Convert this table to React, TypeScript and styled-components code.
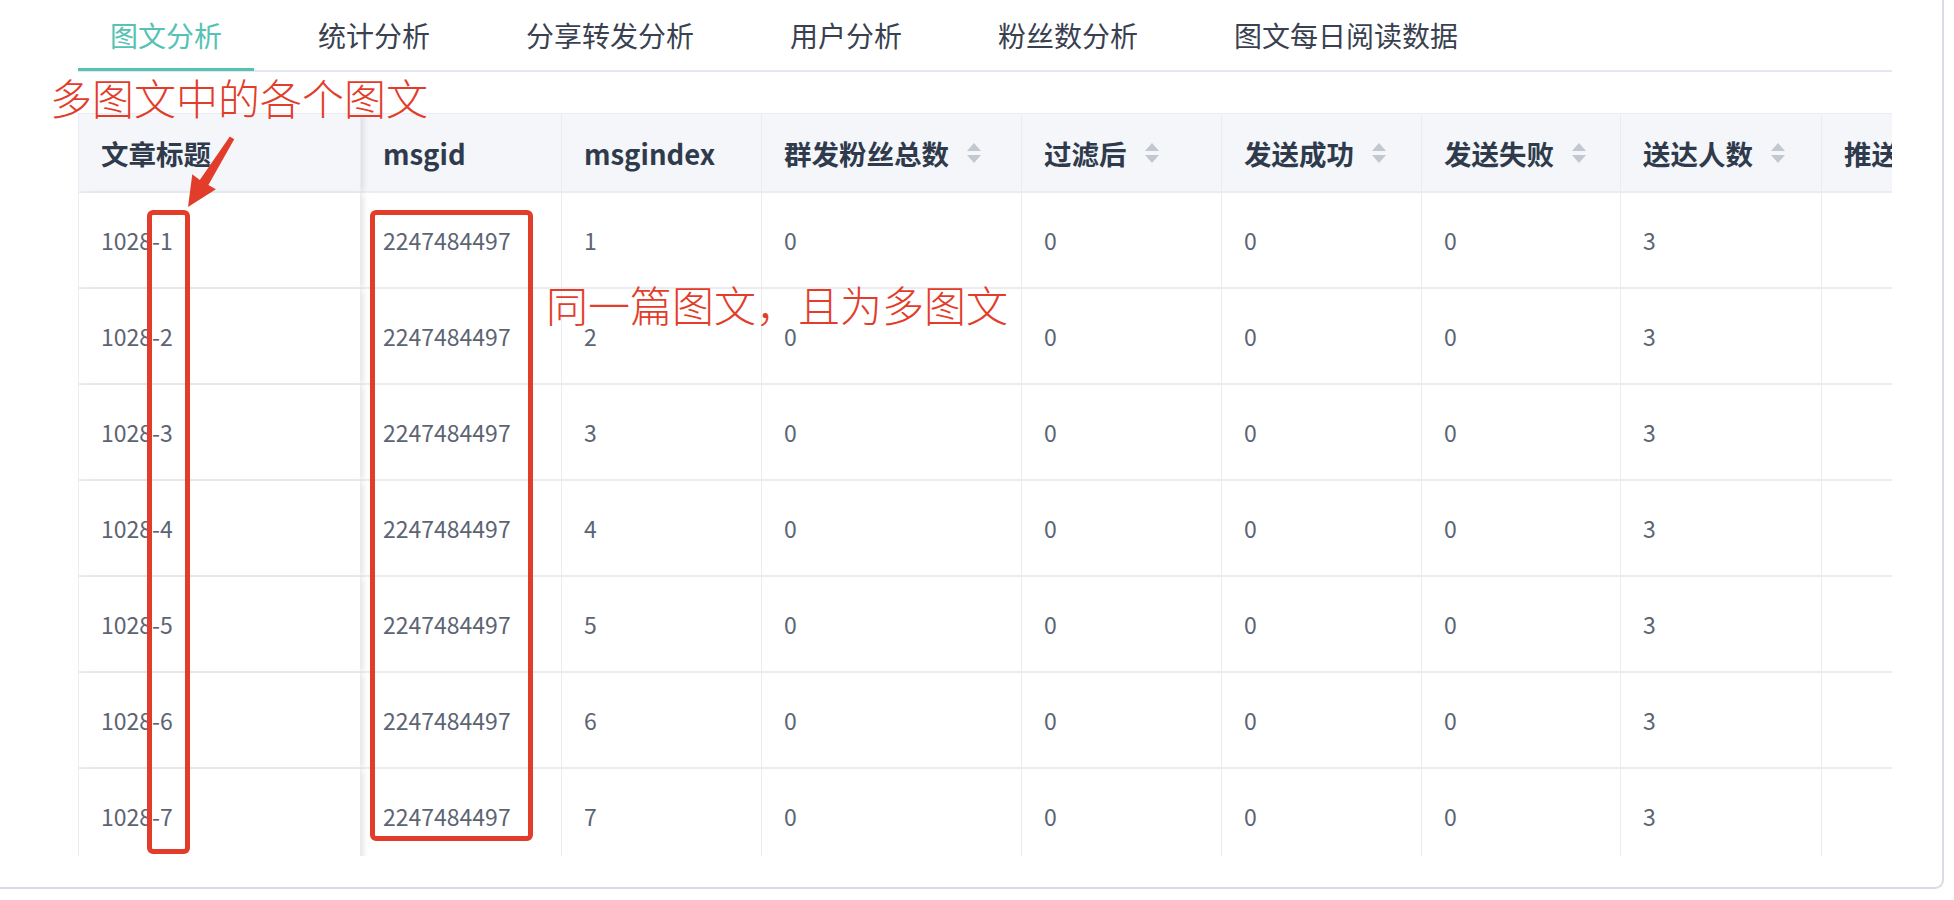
import styled, { createGlobalStyle } from 'styled-components'

const GlobalStyle = createGlobalStyle`
  html, body {
    margin: 0;
    padding: 0;
    background: #ffffff;
    overflow: hidden;
  }
  * {
    box-sizing: border-box;
  }
`

const FONT = `"Noto Sans CJK SC", "Noto Sans", sans-serif`
const ACCENT = '#55c2b3'
const MARK = '#e23d2a'
const LINE = '#e9ecf1'

const TABS = ['图文分析', '统计分析', '分享转发分析', '用户分析', '粉丝数分析', '图文每日阅读数据']

interface Column {
  title: string
  width: number
  sortable?: boolean
}

const COLUMNS: Column[] = [
  { title: '文章标题', width: 282 },
  { title: 'msgid', width: 201 },
  { title: 'msgindex', width: 200 },
  { title: '群发粉丝总数', width: 260, sortable: true },
  { title: '过滤后', width: 200, sortable: true },
  { title: '发送成功', width: 200, sortable: true },
  { title: '发送失败', width: 199, sortable: true },
  { title: '送达人数', width: 201, sortable: true },
  { title: '推送次数', width: 200, sortable: true },
]

const ROWS = Array.from({ length: 7 }, (_, i) => [
  `1028-${i + 1}`,
  '2247484497',
  String(i + 1),
  '0',
  '0',
  '0',
  '0',
  '3',
  '',
])

const Page = styled.div`
  width: 1954px;
  height: 900px;
  font-family: ${FONT};
`

const Card = styled.div`
  position: relative;
  width: 1944px;
  height: 889px;
  border-right: 2px solid #d9dce3;
  border-bottom: 2px solid #d9dce3;
  border-bottom-right-radius: 9px;
  overflow: hidden;
`

const TabBar = styled.div`
  display: flex;
  gap: 32px;
  margin-left: 78px;
  width: 1814px;
  height: 72px;
  border-bottom: 2px solid #e4e7ed;
`

const Tab = styled.div<{ $active?: boolean }>`
  position: relative;
  padding: 0 32px;
  line-height: 70px;
  font-size: 28px;
  white-space: nowrap;
  color: ${(p) => (p.$active ? ACCENT : '#394150')};

  &::after {
    content: '';
    display: ${(p) => (p.$active ? 'block' : 'none')};
    position: absolute;
    left: 0;
    right: 0;
    bottom: -1px;
    height: 3px;
    background: ${ACCENT};
  }
`

const TableViewport = styled.div`
  margin: 41px 0 0 78px;
  width: 1814px;
  height: 743px;
  overflow: hidden;
  border-left: 1px solid ${LINE};
  border-top: 1px solid ${LINE};
`

const Table = styled.table`
  border-collapse: separate;
  border-spacing: 0;
  table-layout: fixed;
  width: ${COLUMNS.reduce((s, c) => s + c.width, 0)}px;
`

const HeadCell = styled.th<{ $fixed?: boolean }>`
  height: 79px;
  padding: 0 22px;
  text-align: left;
  font-size: 27.5px;
  font-weight: 700;
  color: #2f3b4c;
  background: #f4f6f9;
  border-right: 1px solid ${LINE};
  border-bottom: 2px solid ${LINE};
  white-space: nowrap;
  overflow: hidden;
  position: relative;
  z-index: ${(p) => (p.$fixed ? 2 : 1)};
  box-shadow: ${(p) => (p.$fixed ? '4px 0 6px -2px rgba(0, 0, 0, 0.12)' : 'none')};
`

const HeadInner = styled.div`
  display: flex;
  align-items: center;
  gap: 17px;
`

const BodyCell = styled.td<{ $fixed?: boolean }>`
  height: 96px;
  padding: 0 22px;
  font-size: 23px;
  color: #5c6474;
  background: #ffffff;
  border-right: 1px solid ${LINE};
  border-bottom: 2px solid ${LINE};
  white-space: nowrap;
  position: relative;
  z-index: ${(p) => (p.$fixed ? 2 : 1)};
  box-shadow: ${(p) => (p.$fixed ? '4px 0 6px -2px rgba(0, 0, 0, 0.12)' : 'none')};
`

const Overlay = styled.div`
  position: absolute;
  inset: 0;
  pointer-events: none;
  z-index: 5;
`

const Note = styled.span<{ $x: number; $y: number }>`
  position: absolute;
  left: ${(p) => p.$x}px;
  top: ${(p) => p.$y}px;
  font-size: 42px;
  line-height: 42px;
  font-weight: 300;
  color: ${MARK};
  white-space: nowrap;
`

const MarkBox = styled.div<{ $x: number; $y: number; $w: number; $h: number }>`
  position: absolute;
  left: ${(p) => p.$x}px;
  top: ${(p) => p.$y}px;
  width: ${(p) => p.$w}px;
  height: ${(p) => p.$h}px;
  border: 5px solid ${MARK};
  border-radius: 6px;
`

const ArrowSvg = styled.svg`
  position: absolute;
  left: 0;
  top: 0;
`

function SortIcon() {
  return (
    <svg width="16" height="22" viewBox="0 0 16 22">
      <polygon points="8,1 15,9 1,9" fill="#c3c7cf" />
      <polygon points="1,13 15,13 8,21" fill="#c3c7cf" />
    </svg>
  )
}

export default function App() {
  return (
    <Page>
      <GlobalStyle />
      <Card>
        <TabBar>
          {TABS.map((t, i) => (
            <Tab key={t} $active={i === 0}>
              {t}
            </Tab>
          ))}
        </TabBar>

        <TableViewport>
          <Table>
            <colgroup>
              {COLUMNS.map((c) => (
                <col key={c.title} style={{ width: c.width }} />
              ))}
            </colgroup>
            <thead>
              <tr>
                {COLUMNS.map((c, i) => (
                  <HeadCell key={c.title} $fixed={i === 0}>
                    <HeadInner>
                      {c.title}
                      {c.sortable && <SortIcon />}
                    </HeadInner>
                  </HeadCell>
                ))}
              </tr>
            </thead>
            <tbody>
              {ROWS.map((row, r) => (
                <tr key={r}>
                  {row.map((v, i) => (
                    <BodyCell key={i} $fixed={i === 0}>
                      {v}
                    </BodyCell>
                  ))}
                </tr>
              ))}
            </tbody>
          </Table>
        </TableViewport>

        <Overlay>
          <Note $x={50} $y={76}>多图文中的各个图文</Note>
          <Note $x={546} $y={283}>同一篇图文，且为多图文</Note>
          <MarkBox $x={147} $y={210} $w={43} $h={644} />
          <MarkBox $x={370} $y={210} $w={163} $h={631} />
          <ArrowSvg width="300" height="260" viewBox="0 0 300 260">
            <polygon
              points="234.2,139.3 229.8,136.6 199.8,180 192.3,174.2 188,207 215.9,189.2 208.4,184.9"
              fill={MARK}
            />
          </ArrowSvg>
        </Overlay>
      </Card>
    </Page>
  )
}
